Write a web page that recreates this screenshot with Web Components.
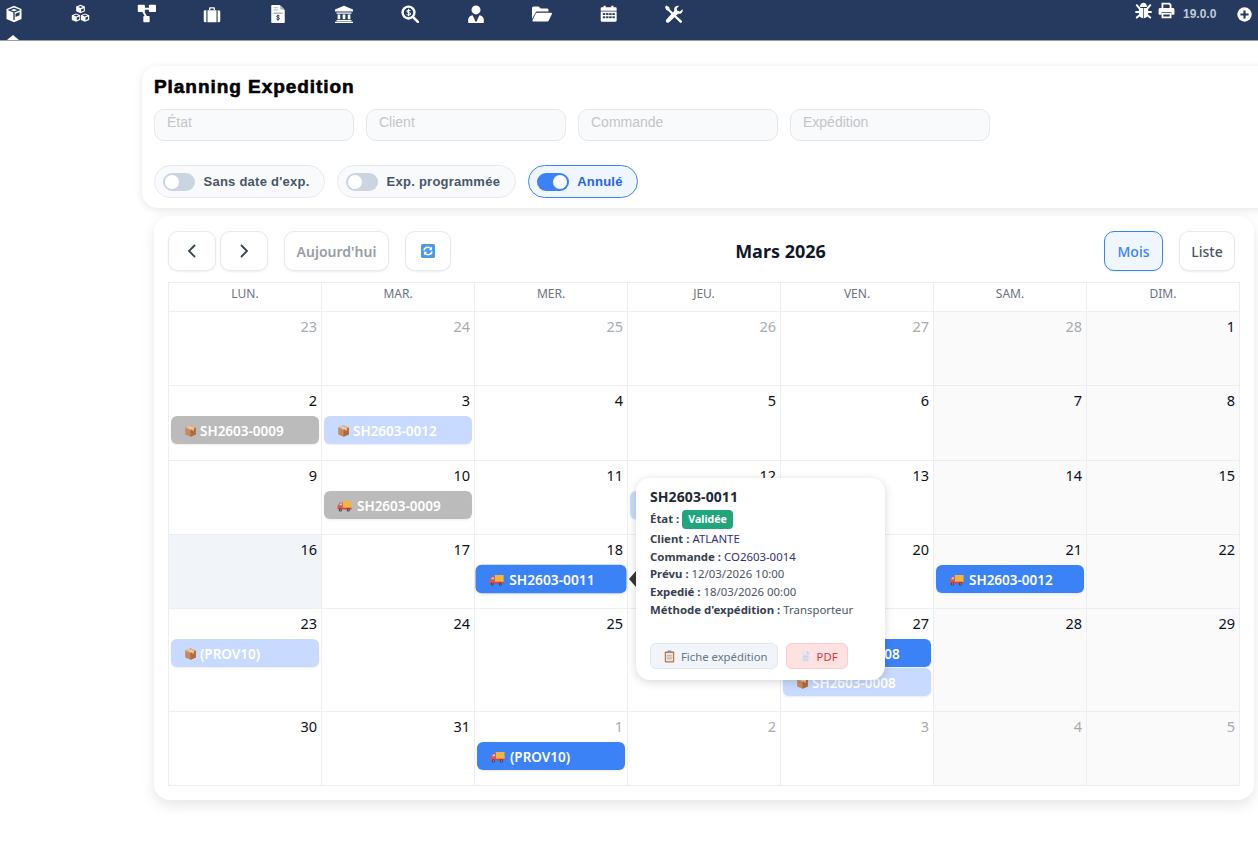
<!DOCTYPE html>
<html lang="fr">
<head>
<meta charset="utf-8">
<title>Planning Expedition</title>
<style>
  html, body { margin: 0; padding: 0; height: 861px; overflow: hidden; background: #fff; }
  body { font-family: "Noto Sans", sans-serif; }
</style>
</head>
<body>
<app-navbar></app-navbar>
<filter-panel></filter-panel>
<calendar-view></calendar-view>

<script>
// svg icons
const W = '#fff', D = '#253a5e';
const NAV_ICONS = {
  cube: `<path fill="${W}" d="M12 1l10 4.2v13.4L12 23 2 18.600V5.200z"/><path fill="none" stroke="${D}" stroke-width="1.700" d="M5.500 6.800L12 4.200l6.500 2.600L12 9.500zM12 9.500V20"/><path fill="${D}" d="M14 11.500l5.500-2.200v4.500L14 16z"/>`,
  cubes: `<path fill="${W}" d="M12 1l5.500 2.300v6L12 11.600 6.500 9.300v-6z"/><path fill="${D}" d="M9 3.800L12 2.600l3 1.200-3 1.200zM12.800 6.600l3.300-1.300v3.200l-3.300 1.400z"/><path fill="${W}" d="M6.500 12l5 2.100v6l-5 2.200-5.500-2.200v-6z"/><path fill="${D}" d="M3.500 14.500l3-1.200 3 1.200-3 1.200zM7.300 17.200l3.200-1.300v3.200l-3.200 1.400z"/><path fill="${W}" d="M17.500 12l5.500 2.100v6l-5.500 2.200-5-2.200v-6z"/><path fill="${D}" d="M14.500 14.500l3-1.200 3 1.200-3 1.200zM18.300 17.200l3.200-1.300v3.200l-3.200 1.400z"/>`,
  diagram: `<path fill="none" stroke="${W}" stroke-width="2.400" d="M6 6h12M6 6l6 11"/><rect x="1" y="1" width="9" height="9" rx="1" fill="${W}"/><rect x="15" y="1" width="9" height="9" rx="1" fill="${W}"/><rect x="8" y="15" width="8" height="8" rx="1" fill="${W}"/>`,
  suitcase: `<path fill="${W}" d="M8 7V4.500C8 3.500 8.800 3 9.500 3h5C15.500 3 16 3.700 16 4.500V7h-1.800V4.800H9.800V7z"/><path fill="${W}" d="M2 7h2.500v16H3a2 2 0 0 1-2-2V8zM6 7h12v16H6zM19.500 7H21a2 2 0 0 1 2 2v12a2 2 0 0 1-2 2h-1.500z"/>`,
  invoice: `<path fill="${W}" d="M4 0h10l7 7v15.500c0 .8-.6 1.500-1.500 1.500h-15C3.600 24 3 23.300 3 22.500V1c0-.5.5-1 1-1z"/><path fill="#a9b4c4" d="M15 0l6 6h-6zM6 3h6v1.300H6zM6 6h6v1.300H6zM6 10h12v2H6z"/><path fill="none" stroke="${D}" stroke-width="1.300" d="M14 14.700c-.6-.8-3.800-1-3.800.6 0 1.700 3.900 1 3.900 2.800 0 1.600-3.200 1.500-4.200.5M12 13v8"/>`,
  bank: `<path fill="${W}" d="M12 1L24 6v2.500H0V6zM2 10h20v1.500H2zM3.500 12.500h3.500v6.500H3.500zM10.200 12.500h3.600v6.500h-3.600zM17 12.500h3.500v6.500H17zM2 20h20v1.500H2zM0 22.200h24V24H0z"/>`,
  search: `<circle cx="10" cy="10" r="9.500" fill="${W}"/><circle cx="10" cy="10" r="6.300" fill="${D}"/><path fill="none" stroke="${W}" stroke-width="3.400" stroke-linecap="round" d="M17 17l5.500 5.500"/><path fill="none" stroke="${W}" stroke-width="1.400" d="M12.500 7.800c-.7-1-4.600-1.200-4.600.7 0 2.100 4.800 1.200 4.800 3.300 0 1.900-4 1.800-5.200.6M10.100 5v10"/>`,
  user: `<circle cx="12" cy="6.500" r="6" fill="${W}"/><path fill="${W}" d="M7.500 13.500L10.500 20 12 15l1.500 5 3-6.500c3.500.3 6 2.500 6 6.500v3c0 .6-.4 1-1 1H2.500c-.6 0-1-.4-1-1v-3c0-4 2.500-6.200 6-6.500z"/><path fill="${D}" d="M10.300 13.200h3.400L12.800 15.500l.9 5-1.700 2-1.700-2 .9-5z"/>`,
  folder: `<path fill="${W}" d="M0 18V5c0-1 .8-2 2-2h6l2.500 2.500H18c1 0 1.800.8 1.800 1.800V9H6.500c-1 0-1.900.6-2.400 1.500z"/><path fill="${W}" d="M6 10.500h17c.7 0 1.200.7.900 1.400l-3.800 7.900c-.3.700-1 1.200-1.800 1.200H1.300c-.7 0-1.100-.7-.8-1.300l3.800-8c.3-.7 1-1.200 1.700-1.200z"/>`,
  calendar: `<path fill="${W}" d="M5 1h3v3H5zM16 1h3v3h-3zM2.500 3H22a1.500 1.500 0 0 1 1.500 1.500V8H1V4.500A1.500 1.500 0 0 1 2.500 3zM1 9.200h22.500V22a1.500 1.500 0 0 1-1.500 1.500H2.500A1.500 1.500 0 0 1 1 22z"/><g fill="${D}"><rect x="4" y="11.500" width="3.400" height="2.600"/><rect x="8.600" y="11.500" width="3.400" height="2.600"/><rect x="13" y="11.500" width="3.400" height="2.600"/><rect x="17.500" y="11.500" width="3.400" height="2.600"/><rect x="4" y="16" width="3.400" height="2.600"/><rect x="8.600" y="16" width="3.400" height="2.600"/><rect x="13" y="16" width="3.400" height="2.600"/><rect x="17.500" y="16" width="3.400" height="2.600"/></g>`,
  tools: `<path fill="${W}" d="M1.500.5l4 2 1 3.500 5.500 5.500-2 2L4.500 8 1.800 6.500 0 3zM14.500 14l7.500 6.500c1 1 1 2 .2 2.800-.8.800-2 .7-2.800-.2L12.500 16z"/><path fill="${W}" d="M23.500 5.500c.4 1.800-.1 3.800-1.500 5-1.300 1.200-3 1.500-4.500 1L5.500 23c-1 1-2.600 1-3.700-.1-1-1-1-2.600 0-3.600L12.500 7.500c-.6-1.800-.2-3.800 1.200-5.200C15 1 17 .6 18.800 1.100L15.500 4.500l1 3.200 3.400 1z"/>`,
  bug: `<path fill="${W}" d="M7 7C7 3.500 9.200 1 12 1s5 2.500 5 6zM5.500 8.500h6V23C7.500 22.500 5.500 20 5.500 16.500zM12.500 8.500h6v8c0 3.500-2 6-6 6.500z"/><path fill="none" stroke="${W}" stroke-width="2.800" stroke-linecap="round" d="M2.500 4.500L6 8.500M21.500 4.500L18 8.500M1.500 14h4M22.500 14h-4M2.500 22l3.500-3M21.500 22L18 19"/>`,
  print: `<path fill="${W}" d="M5 1h11.500L19 3.500V9h-2.500V4.500L15.500 3.500h-8V9H5z"/><path fill="${W}" d="M3 8.500h18c1.200 0 2.200 1 2.200 2.200V17c0 .6-.4 1-1 1H19v-3.500H5V18H1.800c-.6 0-1-.4-1-1v-6.300C.8 9.500 1.800 8.500 3 8.500z"/><path fill="${W}" d="M5 15.500h14V23H5zM7.500 17.800v2.800h9v-2.800z" fill-rule="evenodd"/>`,
  plus: `<circle cx="12" cy="12" r="11.500" fill="${W}"/><path fill="none" stroke="${D}" stroke-width="3.500" d="M12 5.500v13M5.500 12h13"/>`
};

// emoji-like colour icons, drawn because no emoji font can be named
const BOX = `<svg viewBox="0 0 16 16" width="13" height="14"><path fill="#c98a5a" d="M8 1l6.500 2.800v8.400L8 15 1.500 12.200V3.800z"/><path fill="#a96c40" d="M8 6.800l6.500-3v8.400L8 15z"/><path fill="#e2b48c" d="M1.500 3.800L8 1l6.500 2.800L8 6.800z"/><path fill="#f0d6b8" d="M4 2.700l6.500 3v2.300l1.500-.7V5L5.700 2z"/></svg>`;
const TRUCK = `<svg viewBox="0 0 18 16" width="15" height="14"><rect x="7" y="2" width="10.500" height="9" rx=".6" fill="#f3b53f"/><path fill="#e2544b" d="M1 7l2.500-3.300H7V12H.6V8z"/><path fill="#a6d4f2" d="M2.300 7l1.800-2.300H6V7z"/><rect x="6.500" y="10" width="11" height="2.200" fill="#d9453c"/><circle cx="4" cy="12.700" r="1.900" fill="#3b3b4a"/><circle cx="13.500" cy="12.700" r="1.900" fill="#3b3b4a"/><circle cx="4" cy="12.700" r=".7" fill="#ccc"/><circle cx="13.500" cy="12.700" r=".7" fill="#ccc"/></svg>`;
const CLIPBOARD = `<svg viewBox="0 0 14 16" width="11" height="13"><rect x="1" y="1.500" width="12" height="14" rx="1" fill="#b5754a"/><rect x="2.600" y="3.500" width="8.800" height="10.500" fill="#f3ead9"/><rect x="4.500" y=".5" width="5" height="3" rx=".6" fill="#8d8d96"/><path stroke="#a99" stroke-width="1" d="M4 6.500h6M4 8.800h6M4 11h6"/></svg>`;
const PAGE = `<svg viewBox="0 0 14 16" width="11" height="13"><path fill="#e2e5f2" d="M2 1h7l3.500 3.500V15H2z"/><path fill="#c3c8de" d="M9 1l3.500 3.500H9zM4 7h6.500v1.200H4zM4 9.500h6.500v1.200H4zM4 12h6.500v1.200H4z"/></svg>`;
const REFRESH = `<svg viewBox="0 0 14 14" width="14" height="14"><rect width="14" height="14" rx="1.500" fill="#4d9be8"/><path fill="none" stroke="#fff" stroke-width="1.500" d="M3 6.300C3.300 4.500 5 3.300 7 3.300c1.300 0 2.400.6 3 1.500M11 7.700c-.3 1.800-2 3-4 3-1.300 0-2.400-.6-3-1.500"/><path fill="#fff" d="M11 2.800v3.400H7.600zM3 11.200V7.800h3.400z"/></svg>`;

function icon(name, w) {
  return `<svg viewBox="0 0 24 24" width="${w}" height="${w}">${NAV_ICONS[name]}</svg>`;
}

class AppNavbar extends HTMLElement {
  constructor() {
    super();
    this.root = this.attachShadow({mode: 'open'});
  }
  connectedCallback() {
    const left = [['cube',18],['cubes',19],['diagram',19],['suitcase',18],['invoice',18],['bank',18],['search',18],['user',18],['folder',20],['calendar',17],['tools',18]];
    this.root.innerHTML = `
      <style>
        :host { display: flex; position: relative; height: 40px; background: ${D}; border-bottom: 1px solid #9aa0a8; box-sizing: content-box; }
        .item { width: 28px; height: 27px; margin-right: 38px; display: flex; align-items: center; justify-content: center; flex: none; }
        .right { margin-left: auto; display: flex; align-items: flex-start; height: 40px; }
        .right .s { display: flex; align-items: center; justify-content: center; height: 21px; }
        .ver { font: bold 12px "Liberation Sans", sans-serif; color: #c3cad5; margin-left: 8px; width: 53px; line-height: 28px; }
        .caret { position: absolute; left: 7px; top: 35px; width: 0; height: 0; border: 6px solid transparent; border-top: 0; border-bottom: 5px solid #fff; }
      </style>
      ${left.map(([n, w]) => `<span class="item">${icon(n, w)}</span>`).join('')}
      <span class="caret"></span>
      <div class="right">
        <span class="s" style="width:18px">${icon('bug', 17)}</span>
        <span class="s" style="width:18px;margin-left:5px">${icon('print', 17)}</span>
        <span class="ver">19.0.0</span>
        <span class="s" style="width:16px;height:28px;margin-right:6px">${icon('plus', 15)}</span>
      </div>`;
  }
}

class FilterInput extends HTMLElement {
  constructor() {
    super();
    this.attachShadow({mode: 'open'}).innerHTML = `
      <style>
        :host { display: block; width: 200px; height: 32px; box-sizing: border-box; background: #f9fafb; border: 1px solid #e5e7eb; border-radius: 10px; padding: 3px 12px; font: 14px/18px "Liberation Sans", sans-serif; color: #c2c5ca; }
      </style>
      <slot></slot>`;
  }
}

class ToggleChip extends HTMLElement {
  constructor() {
    super();
    this.attachShadow({mode: 'open'}).innerHTML = `
      <style>
        :host { display: flex; align-items: center; gap: 8.500px; height: 33px; box-sizing: border-box; padding: 0 14.500px 0 8px; border: 1px solid #e5e9ef; border-radius: 17px; background: #f8fafc; font: bold 13px "Liberation Sans", sans-serif; letter-spacing: .25px; color: #475569; }
        .track { width: 32px; height: 18px; border-radius: 9px; background: #cbd5e1; position: relative; flex: none; }
        .knob { position: absolute; left: 2px; top: 2px; width: 14px; height: 14px; border-radius: 50%; background: #fff; }
        :host([on]) { background: #eff6ff; border-color: #3b82f6; color: #2563eb; }
        :host([on]) .track { background: #3b82f6; }
        :host([on]) .knob { left: 16px; }
      </style>
      <span class="track"><span class="knob"></span></span><slot></slot>`;
  }
}

class FilterPanel extends HTMLElement {
  constructor() {
    super();
    this.attachShadow({mode: 'open'}).innerHTML = `
      <style>
        :host { display: block; width: 1140px; margin: 25px 0 0 142px; box-sizing: border-box; padding: 10px 12px; height: 142px; background: #fff; border-radius: 16px; box-shadow: 0 2px 8px rgba(0,0,0,.1); position: relative; z-index: 1; }
        h1 { margin: 0 0 11px 0; font: bold 19px/22px "Liberation Sans", sans-serif; -webkit-text-stroke: .6px #000; letter-spacing: .95px; color: #000; }
        .inputs { display: flex; gap: 12px; margin-bottom: 24px; }
        .chips { display: flex; gap: 12px; }
      </style>
      <h1>Planning Expedition</h1>
      <div class="inputs">
        <filter-input>État</filter-input>
        <filter-input>Client</filter-input>
        <filter-input>Commande</filter-input>
        <filter-input>Expédition</filter-input>
      </div>
      <div class="chips">
        <toggle-chip>Sans date d'exp.</toggle-chip>
        <toggle-chip>Exp. programmée</toggle-chip>
        <toggle-chip on>Annulé</toggle-chip>
      </div>`;
  }
}

class CalEvent extends HTMLElement {
  constructor() {
    super();
    this.attachShadow({mode: 'open'}).innerHTML = `
      <style>
        :host { display: flex; align-items: center; height: 28px; margin: 0 2px 1px; padding: 1px 0 0 13px; box-sizing: border-box; border-radius: 6px; color: #fff; font: 600 13.500px "Noto Sans", sans-serif; white-space: nowrap; overflow: hidden; box-shadow: 0 1px 2px rgba(0,0,0,.08); }
        :host([tone=blue]) { background: #3b82f6; }
        :host([tone=pale]) { background: #c8daff; }
        :host([tone=grey]) { background: #bbbbbb; }
        :host([hover]) { transform: scale(1.02); }
        .ic { display: flex; flex: none; margin-right: 3px; }
        :host([kind=truck]) .ic { margin-right: 5px; }
      </style>
      <span class="ic"></span><slot></slot>`;
  }
  connectedCallback() {
    this.shadowRoot.querySelector('.ic').innerHTML = this.getAttribute('kind') === 'truck' ? TRUCK : BOX;
  }
}

class CalCell extends HTMLElement {
  constructor() {
    super();
    this.attachShadow({mode: 'open'}).innerHTML = `
      <style>
        :host { display: block; min-width: 0; border-right: 1px solid #eceef1; border-bottom: 1px solid #eceef1; background: #fff; }
        :host([weekend]) { background: #fafafa; }
        :host([today]) { background: #f1f5f9; }
        .num { height: 22px; line-height: 22px; margin: 3px 0 5px; padding-right: 4px; text-align: right; font-size: 14.500px; color: #0b0f19; }
        :host([other]) .num { color: #a8abb0; }
      </style>
      <div class="num"></div><slot></slot>`;
  }
  connectedCallback() {
    this.shadowRoot.querySelector('.num').textContent = this.getAttribute('day');
  }
}

class EventPopover extends HTMLElement {
  constructor() {
    super();
    this.attachShadow({mode: 'open'}).innerHTML = `
      <style>
        :host { position: absolute; left: 482px; top: 262px; width: 249px; height: 202px; box-sizing: border-box; padding: 9px 14px; background: #fff; border-radius: 14px; box-shadow: 0 2px 10px rgba(0,0,0,.16); color: #4b5563; font: 11.400px "Noto Sans", sans-serif; z-index: 3; }
        .arrow { position: absolute; left: -7px; top: 93px; width: 0; height: 0; border: 8px solid transparent; border-left: 0; border-right: 7px solid #333; }
        h3 { margin: 0 0 3px; font: bold 14px/19px "Noto Sans", sans-serif; color: #1f2937; letter-spacing: .1px; }
        .row { line-height: 17.700px; white-space: nowrap; }
        .row b { color: #374151; font-weight: 700; }
        .navy { color: #312e81; }
        .badge { display: inline-block; padding: 0 6px; line-height: 19px; border-radius: 4px; background: #22a57b; color: #fff; font-weight: 700; font-size: 10.600px; margin: 0 0 1px 0; vertical-align: middle; }
        .first { line-height: 20px; }
        .btns { position: absolute; left: 14px; top: 165px; display: flex; gap: 8px; }
        .btn { display: flex; align-items: center; gap: 6px; height: 26px; box-sizing: border-box; padding: 0 9px 0 13px; border-radius: 6px; border: 1px solid #e2e8f0; background: #f1f5f9; color: #64748b; font-size: 11.300px; }
        .btn.pdf { border-color: #fecaca; background: #fee2e2; color: #dc3545; }
      </style>
      <span class="arrow"></span>
      <h3>SH2603-0011</h3>
      <div class="row first"><b>État :</b> <span class="badge">Validée</span></div>
      <div class="row"><b>Client :</b> <span class="navy">ATLANTE</span></div>
      <div class="row"><b>Commande :</b> <span class="navy">CO2603-0014</span></div>
      <div class="row"><b>Prévu :</b> 12/03/2026 10:00</div>
      <div class="row"><b>Expedié :</b> 18/03/2026 00:00</div>
      <div class="row"><b>Méthode d'expédition :</b> Transporteur</div>
      <div class="btns">
        <span class="btn">${CLIPBOARD}Fiche expédition</span>
        <span class="btn pdf">${PAGE}PDF</span>
      </div>`;
  }
}

class CalendarView extends HTMLElement {
  constructor() {
    super();
    this.attachShadow({mode: 'open'});
  }
  connectedCallback() {
    const weeks = [
      [[23,1],[24,1],[25,1],[26,1],[27,1],[28,1],[1]],
      [[2],[3],[4],[5],[6],[7],[8]],
      [[9],[10],[11],[12],[13],[14],[15]],
      [[16],[17],[18],[19],[20],[21],[22]],
      [[23],[24],[25],[26],[27],[28],[29]],
      [[30],[31],[1,1],[2,1],[3,1],[4,1],[5,1]]
    ];
    // events by "week,col"
    const events = {
      '1,0': [['grey','box','SH2603-0009']],
      '1,1': [['pale','box','SH2603-0012']],
      '2,1': [['grey','truck','SH2603-0009']],
      '2,3': [['pale','truck','SH2603-0011']],
      '3,2': [['blue','truck','SH2603-0011','hover']],
      '3,5': [['blue','truck','SH2603-0012']],
      '4,0': [['pale','box','(PROV10)']],
      '4,4': [['blue','truck','SH2603-0008'],['pale','box','SH2603-0008']],
      '5,2': [['blue','truck','(PROV10)']]
    };
    let cells = '';
    weeks.forEach((w, r) => w.forEach((d, c) => {
      const evs = (events[r + ',' + c] || []).map(e =>
        `<cal-event tone="${e[0]}" kind="${e[1]}" ${e[3] || ''}>${e[2]}</cal-event>`).join('');
      const attrs = (d[1] ? ' other' : '') + (c > 4 ? ' weekend' : '') + (r === 3 && c === 0 ? ' today' : '');
      cells += `<cal-cell day="${d[0]}"${attrs}>${evs}</cal-cell>`;
    }));
    const days = ['LUN.','MAR.','MER.','JEU.','VEN.','SAM.','DIM.'];
    this.shadowRoot.innerHTML = `
      <style>
        :host { display: block; position: relative; width: 1100px; box-sizing: border-box; margin: 8px 0 0 154px; padding: 15px 14px 14px; background: #fff; border-radius: 16px; box-shadow: 0 5px 14px rgba(0,0,0,.1); }
        .bar { display: flex; align-items: center; justify-content: space-between; height: 40px; margin-bottom: 11px; }
        .group { display: flex; align-items: center; }
        button { box-sizing: border-box; height: 40px; border: 1px solid #e8eaee; border-radius: 10px; background: #fff; box-shadow: 0 1px 2px rgba(0,0,0,.07); font: 500 14px "Noto Sans", sans-serif; color: #4b5563; padding: 0; display: flex; align-items: center; justify-content: center; }
        .nav { width: 48px; }
        .nav + .nav { margin-left: 4px; }
        .today { width: 105px; margin-left: 16px; color: #979ca6; font-weight: 600; }
        .ref { width: 46px; margin-left: 16px; }
        .mois { width: 59px; background: #eff6ff; border-color: #3b82f6; color: #3b82f6; }
        .liste { width: 56px; margin-left: 16px; margin-right: 5px; }
        h2 { margin: 0 0 0 6px; font: 700 18px "Noto Sans", sans-serif; color: #0f172a; }
        .grid { display: grid; grid-template-columns: repeat(7, 153px); grid-template-rows: 29px 74px 75px 74px 74px 103px 74px; width: 1072px; box-sizing: border-box; border-left: 1px solid #eceef1; border-top: 1px solid #eceef1; }
        .head { border-right: 1px solid #eceef1; border-bottom: 1px solid #eceef1; text-align: center; font-size: 12px; line-height: 22px; color: #6b7280; }
      </style>
      <div class="bar">
        <div class="group">
          <button class="nav"><svg width="14" height="16" viewBox="0 0 14 16"><path d="M10 2L4 8l6 6" fill="none" stroke="#374151" stroke-width="1.800"/></svg></button>
          <button class="nav"><svg width="14" height="16" viewBox="0 0 14 16"><path d="M4 2l6 6-6 6" fill="none" stroke="#374151" stroke-width="1.800"/></svg></button>
          <button class="today">Aujourd'hui</button>
          <button class="ref">${REFRESH}</button>
        </div>
        <h2>Mars 2026</h2>
        <div class="group">
          <button class="mois">Mois</button>
          <button class="liste">Liste</button>
        </div>
      </div>
      <div class="grid">
        ${days.map(d => `<div class="head">${d}</div>`).join('')}
        ${cells}
      </div>
      <event-popover></event-popover>`;
  }
}

customElements.define('app-navbar', AppNavbar);
customElements.define('filter-input', FilterInput);
customElements.define('toggle-chip', ToggleChip);
customElements.define('filter-panel', FilterPanel);
customElements.define('cal-event', CalEvent);
customElements.define('cal-cell', CalCell);
customElements.define('event-popover', EventPopover);
customElements.define('calendar-view', CalendarView);
</script>
</body>
</html>
